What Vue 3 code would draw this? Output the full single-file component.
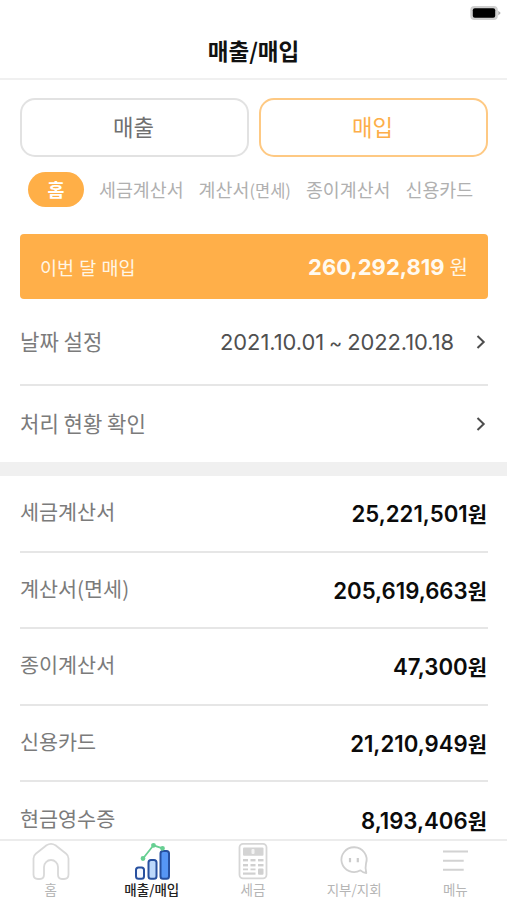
<script setup>
const filters = [
  { label: '세금계산서' },
  { label: '계산서', note: '(면세)' },
  { label: '종이계산서' },
  { label: '신용카드' },
]
const rows = [
  { label: '세금계산서', value: '25,221,501' },
  { label: '계산서(면세)', value: '205,619,663' },
  { label: '종이계산서', value: '47,300' },
  { label: '신용카드', value: '21,210,949' },
  { label: '현금영수증', value: '8,193,406' },
]
</script>

<template>
  <div class="screen">
    <header class="header">
      <div class="status">
        <svg width="32" height="16" viewBox="0 0 32 16">
          <rect x="0.3" y="1" width="27.5" height="14" rx="4" fill="#cfcfcf" />
          <rect x="2.8" y="3.3" width="22.4" height="9.5" rx="2" fill="#000" />
          <path d="M28.3 5.8 L30.7 8 L28.3 10.4Z" fill="#aaa" />
        </svg>
      </div>
      <h1 class="title">매출/매입</h1>
    </header>

    <main class="content">
      <div class="tabs">
        <button class="tab">매출</button>
        <button class="tab active">매입</button>
      </div>

      <div class="filters">
        <span class="pill">홈</span>
        <span v-for="f in filters" :key="f.label" class="filter">{{ f.label }}<small v-if="f.note">{{ f.note }}</small></span>
      </div>

      <section class="banner">
        <span class="banner-label">이번 달 매입</span>
        <span class="banner-sum"><b>260,292,819</b><span class="won">원</span></span>
      </section>

      <section class="settings">
        <div class="setting first">
          <span class="label">날짜 설정</span>
          <span class="date"><span>2021.10.01</span><span class="tilde">~</span><span>2022.10.18</span></span>
          <svg class="chevron" width="10" height="14" viewBox="0 0 10 14"><path d="M1.5 1 L7.7 7 L1.5 13" /></svg>
        </div>
        <div class="setting">
          <span class="label">처리 현황 확인</span>
          <svg class="chevron" width="10" height="14" viewBox="0 0 10 14"><path d="M1.5 1 L7.7 7 L1.5 13" /></svg>
        </div>
      </section>

      <div class="band"></div>

      <ul class="list">
        <li v-for="r in rows" :key="r.label" class="row">
          <span class="label">{{ r.label }}</span>
          <span class="amount">{{ r.value }}<span class="unit">원</span></span>
        </li>
      </ul>
    </main>

    <nav class="nav">
      <a class="item">
        <svg width="44" height="40" viewBox="0 0 44 40" fill="none" stroke="#d9d9d9" stroke-width="1.8" stroke-linejoin="round">
          <path d="M4.5 17.5 Q4.5 14.5 6.8 12.7 L17.5 4.3 Q22 1.4 26.5 4.3 L37.2 12.7 Q39.5 14.5 39.5 17.5 V33.5 Q39.5 38 35 38 H33 Q29 38 29 33.5 V26 A7 7 0 0 0 15 26 V33.5 Q15 38 11 38 H9 Q4.5 38 4.5 33.5 Z" />
        </svg>
        <span>홈</span>
      </a>
      <a class="item on">
        <svg width="44" height="40" viewBox="0 0 44 40">
          <g stroke="#27509f" stroke-width="2">
            <rect x="6" y="26.5" width="8" height="11.3" rx="2.5" fill="#f4f8ff" />
            <rect x="18.5" y="19" width="8" height="18.8" rx="2.5" fill="#bcd8fb" />
            <rect x="30.5" y="10" width="8.5" height="27.8" rx="2.5" fill="#5696f5" />
          </g>
          <g stroke="#67cf92" fill="#67cf92" stroke-width="1.8">
            <path d="M13 17.5 L23.5 4.3 L32.5 7.3" fill="none" />
            <circle cx="13" cy="17.5" r="1.5" /><circle cx="23.5" cy="4.3" r="1.5" /><circle cx="32.5" cy="7.3" r="1.5" />
          </g>
        </svg>
        <span>매출/매입</span>
      </a>
      <a class="item">
        <svg width="44" height="40" viewBox="0 0 44 40">
          <rect x="8.5" y="2.8" width="27" height="34.5" rx="3.5" fill="#fff" stroke="#d6d6d6" stroke-width="1.8" />
          <rect x="12" y="6.5" width="20.5" height="8.3" rx="1" fill="#d4d4d4" />
          <rect x="20.5" y="8" width="3" height="5" rx="1" fill="#f3f3f3" />
          <g fill="#d0d0d0">
            <rect x="12" y="18" width="5" height="2.4" /><rect x="19.5" y="18" width="5" height="2.4" /><rect x="27" y="18" width="5.5" height="2.4" />
            <rect x="12" y="23" width="5" height="2.4" /><rect x="19.5" y="23" width="5" height="2.4" /><rect x="27" y="23" width="5.5" height="2.4" />
            <rect x="12" y="27.5" width="5" height="1.8" /><rect x="19.5" y="27.5" width="5" height="1.8" />
            <rect x="12" y="31.5" width="12.5" height="2.2" /><rect x="27" y="27.5" width="5.5" height="6.3" rx="1" />
          </g>
        </svg>
        <span>세금</span>
      </a>
      <a class="item">
        <svg width="44" height="40" viewBox="0 0 44 40">
          <path d="M28.5 29.3 A12.6 12.4 0 1 1 34 22.5 Q33 26.5 34.3 32 Q31 31.6 28.5 29.3 Z" fill="none" stroke="#d0d0d0" stroke-width="1.8" stroke-linejoin="round" />
          <path d="M18 17 V21.2 M25.8 17 V21.2" stroke="#cbcbcb" stroke-width="2.2" />
        </svg>
        <span>지부/지회</span>
      </a>
      <a class="item">
        <svg width="44" height="40" viewBox="0 0 44 40" stroke="#d2d2d2" stroke-width="2">
          <path d="M10 10.5 H35 M10 19.7 H30.7 M10 28.8 H30.7" />
        </svg>
        <span>메뉴</span>
      </a>
    </nav>
  </div>
</template>

<style>
body { margin: 0; background: #fff; }
</style>

<style scoped>
.screen {
  width: 507px;
  height: 900px;
  display: flex;
  flex-direction: column;
  overflow: hidden;
  background: #fff;
  font-family: Inter, "Noto Sans CJK KR", sans-serif;
  color: #7b7b7b;
}
.header {
  box-sizing: border-box;
  height: 80px;
  flex: none;
  border-bottom: 2px solid #f0f0f0;
}
.status {
  height: 21px;
  padding: 5px 5px 0 0;
  display: flex;
  justify-content: flex-end;
}
.title {
  margin: 8px 0 0;
  text-align: center;
  font: 700 22.5px/32px "Noto Sans CJK KR", sans-serif;
  color: #111;
}
.content {
  flex: 1;
  min-height: 0;
  overflow: hidden;
}
.tabs {
  display: flex;
  gap: 10px;
  padding: 18px 19px 0 20px;
}
.tab {
  flex: 1;
  height: 59px;
  padding: 0 2px 3px 0;
  border: 2px solid #e2e2e2;
  border-radius: 15px;
  background: #fff;
  font: 400 22.3px/1 "Noto Sans CJK KR", sans-serif;
  color: #707070;
}
.tab.active {
  border-color: #fec983;
  color: #fdae49;
}
.filters {
  display: flex;
  align-items: center;
  gap: 15px;
  height: 35px;
  padding: 15px 0 0 28px;
  font: 400 18.4px/35px "Noto Sans CJK KR", sans-serif;
  color: #b0b0b0;
  white-space: nowrap;
}
.filter small { font-size: 16.5px; }
.pill {
  width: 56px;
  height: 35px;
  border-radius: 18px;
  background: #ffaf47;
  color: #fff;
  font-weight: 700;
  text-align: center;
}
.banner {
  display: flex;
  justify-content: space-between;
  align-items: center;
  height: 65px;
  margin: 27px 19px 0 20px;
  padding: 0 20px;
  box-sizing: border-box;
  border-radius: 4px;
  background: #ffaf49;
  color: #fff6e5;
}
.banner-label { font-size: 18.5px; }
.banner-sum { font-size: 22px; white-space: nowrap; }
.banner-sum b { font-weight: 700; color: #fffaf0; }
.won { margin-left: 5px; font-size: 20px; }
.settings { padding: 0 19px 0 20px; }
.setting {
  display: flex;
  align-items: center;
  height: 76px;
}
.setting.first {
  height: 85px;
  border-bottom: 2px solid #e6e6e6;
}
.label {
  flex: 1;
  font-family: "Noto Sans CJK KR", sans-serif;
  font-size: 20.7px;
}
.setting .label { padding-bottom: 2px; font-size: 21.1px; }
.date {
  display: flex;
  gap: 5px;
  margin-right: 22px;
  padding-top: 1px;
  font-size: 21.9px;
  letter-spacing: -0.05px;
  color: #505050;
}
.tilde { padding-top: 2px; font-size: 20px; }
.chevron {
  margin-right: 2px;
  fill: none;
  stroke: #4d4d4d;
  stroke-width: 2;
}
.band { height: 14px; background: #f0f0f0; }
.list {
  margin: 0;
  padding: 0 19px 0 20px;
  list-style: none;
}
.row {
  box-sizing: border-box;
  display: flex;
  align-items: center;
  height: 76.6px;
  border-bottom: 2px solid #e6e6e6;
}
.row .label { padding-bottom: 4px; }
.amount {
  padding-right: 1px;
  font-size: 22.2px;
  font-weight: 600;
  color: #0b0b0b;
}
.unit { font-size: 21px; }
.nav {
  box-sizing: border-box;
  flex: none;
  height: 61px;
  display: grid;
  grid-template-columns: repeat(5, 101.2px);
  border-top: 2px solid #ececec;
  background: #fff;
}
.item {
  display: flex;
  flex-direction: column;
  align-items: center;
  font: 400 13.5px/16px "Noto Sans CJK KR", sans-serif;
  color: #b5b5b5;
}
.item.on { color: #222; font-weight: 500; }
.item svg { display: block; flex: none; }
</style>
